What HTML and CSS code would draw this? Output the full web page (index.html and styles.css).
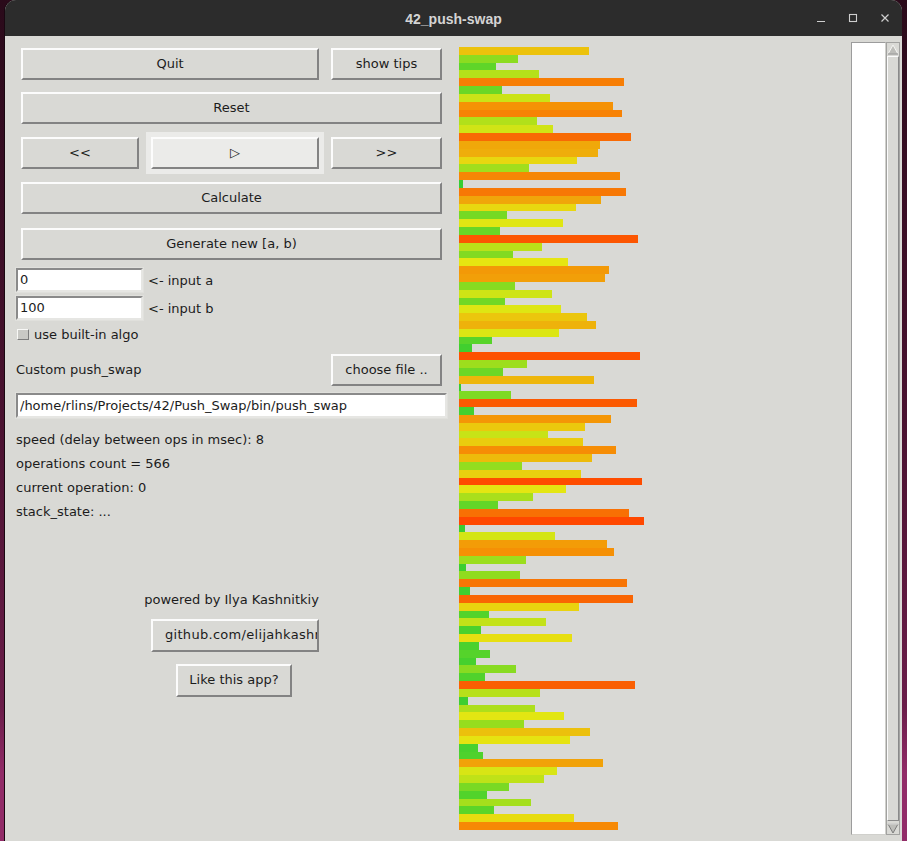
FILE: index.html
```html
<!DOCTYPE html>
<html lang="en">
<head>
<meta charset="utf-8">
<title>42_push-swap</title>
<link rel="stylesheet" href="styles.css">
</head>
<body>
<div class="window">
  <header class="titlebar">
    <span></span>
    <span class="title">42_push-swap</span>
    <div class="controls">
      <svg class="ctl" width="10" height="10" viewBox="0 0 10 10"><path d="M1 8.5H9" stroke="#cfcfcf" stroke-width="1.2"/></svg>
      <svg class="ctl" width="10" height="10" viewBox="0 0 10 10"><rect x="1.5" y="1.5" width="7" height="7" fill="none" stroke="#cfcfcf" stroke-width="1.1"/></svg>
      <svg class="ctl" width="10" height="10" viewBox="0 0 10 10"><path d="M1.5 1.5L8.5 8.5M8.5 1.5L1.5 8.5" stroke="#cfcfcf" stroke-width="1.2"/></svg>
    </div>
  </header>
  <main class="content">
    <section class="left">
      <div class="row r1">
        <button class="btn w-quit">Quit</button>
        <button class="btn w-small">show tips</button>
      </div>
      <button class="btn full r2">Reset</button>
      <div class="row r3">
        <button class="btn w-prev">&lt;&lt;</button>
        <div class="focus"><button class="btn play">▷</button></div>
        <button class="btn w-small">&gt;&gt;</button>
      </div>
      <button class="btn full r4">Calculate</button>
      <button class="btn full r5">Generate new [a, b)</button>
      <div class="field r6"><input class="entry short" value="0"><span>&lt;- input a</span></div>
      <div class="field r7"><input class="entry short" value="100"><span>&lt;- input b</span></div>
      <label class="check r8"><span class="box"></span><span>use built-in algo</span></label>
      <div class="row r9">
        <span class="lbl">Custom push_swap</span>
        <button class="btn w-small">choose file ..</button>
      </div>
      <input class="entry long" value="/home/rlins/Projects/42/Push_Swap/bin/push_swap">
      <div class="stats">
        <p>speed (delay between ops in msec): 8</p>
        <p>operations count = 566</p>
        <p>current operation: 0</p>
        <p>stack_state: ...</p>
      </div>
      <div class="credits">
        <p class="powered">powered by Ilya Kashnitkiy</p>
        <button class="btn gh">github.com/elijahkashnitkiy</button>
        <button class="btn like">Like this app?</button>
      </div>
    </section>
    <section class="canvas" id="bars"></section>
    <aside class="listwrap">
      <div class="listbox"></div>
      <div class="scrollbar">
        <div class="arrow"><svg width="12" height="11" viewBox="0 0 12 11"><path d="M6 1L11 10H1Z" fill="#bdbdb9" stroke="#f4f4f2" stroke-width="1"/><path d="M11 10H1" stroke="#7c7c7c"/></svg></div>
        <div class="slider"></div>
        <div class="arrow"><svg width="12" height="11" viewBox="0 0 12 11"><path d="M6 10L11 1H1Z" fill="#bdbdb9" stroke="#7c7c7c" stroke-width="1"/><path d="M1 1H11" stroke="#f4f4f2"/></svg></div>
      </div>
    </aside>
  </main>
</div>
<script src="app.js"></script>
</body>
</html>
```

FILE: styles.css
```css
* { box-sizing: border-box; margin: 0; padding: 0; }
html, body { width: 907px; height: 841px; overflow: hidden; }
body {
  background: linear-gradient(#2a0a1a 0%, #4a1230 50%, #6a1d49 84%, #922c68 92%, #922c68 100%);
  font-family: "DejaVu Sans", sans-serif;
  font-size: 13px;
  color: #1c1c1c;
}
.window {
  margin-left: 5px;
  width: 897px;
  height: 841px;
  background: #d9d9d5;
  border-radius: 11px 11px 0 0;
  overflow: hidden;
  box-shadow: -1px 0 0 #1a0711;
}
.titlebar {
  height: 36px;
  background: #2c2c2c;
  display: grid;
  grid-template-columns: 1fr auto 1fr;
  align-items: center;
}
.title {
  font: bold 14px "Liberation Sans", sans-serif;
  color: #d4d4d4;
  padding-top: 1px;
}
.controls {
  justify-self: end;
  display: flex;
  gap: 22px;
  padding-right: 12px;
  align-items: center;
}
.ctl { display: block; }

.content { display: flex; height: 805px; }

.left {
  width: 454px;
  flex: none;
  padding-left: 11px;
  display: flex;
  flex-direction: column;
  align-items: flex-start;
}
.btn {
  font: inherit;
  color: inherit;
  background: #d9d9d5;
  border: 2px solid;
  border-color: #fcfcfc #838383 #838383 #fcfcfc;
  height: 32px;
  padding-bottom: 2px;
  display: flex;
  align-items: center;
  justify-content: center;
  flex: none;
}
.row { display: flex; align-items: center; margin-left: 5px; }
.full { width: 421px; margin-left: 5px; }
.r1 { margin-top: 12px; gap: 12px; }
.w-quit { width: 298px; }
.w-small { width: 111px; }
.r2 { margin-top: 12px; }
.r3 { margin-top: 8px; gap: 7px; }
.w-prev { width: 118px; }
.focus { background: #ebebe9; padding: 5px; width: 178px; }
.play { width: 168px; background: #ebebe9; font-family: "DejaVu Sans", sans-serif; }
.r4 { margin-top: 8px; }
.r5 { margin-top: 14px; }

.field { display: flex; align-items: center; gap: 5px; }
.r6 { margin-top: 8px; }
.r7 { margin-top: 4px; }
.entry {
  font: inherit;
  color: inherit;
  background: #fff;
  border: 2px solid;
  border-color: #8a8a8a #e6e6e3 #e6e6e3 #8a8a8a;
  outline: 1px solid #e0e0dc;
  padding: 0 2px 1px;
  height: 24px;
}
.short { width: 127px; }
.long { width: 431px; height: 25px; margin-top: 7px; }

.check { display: flex; align-items: center; gap: 5px; height: 20px; margin-top: 4px; margin-left: 1px; }
.box {
  width: 12px;
  height: 11px;
  background: #c9c9c5;
  border: 1px solid;
  border-color: #f8f8f6 #7d7d7d #7d7d7d #f8f8f6;
}
.r9 { margin-top: 10px; margin-left: 0; width: 426px; justify-content: space-between; }
.lbl { padding-bottom: 1px; }

.stats { margin-top: 10px; }
.stats p { line-height: 24px; }

.credits { margin-left: 5px; width: 421px; margin-top: 64px; display: flex; flex-direction: column; align-items: flex-start; }
.powered { line-height: 24px; align-self: center; }
.gh {
  width: 168px;
  height: 33px;
  margin-top: 7px;
  margin-left: 130px;
  justify-content: flex-start;
  padding-left: 12px;
  overflow: hidden;
  white-space: nowrap;
  letter-spacing: 0.3px;
}
.like { width: 116px; height: 33px; margin-top: 12px; margin-left: 155px; }

.canvas {
  width: 392px;
  flex: none;
  padding-top: 11px;
  display: flex;
  flex-direction: column;
  align-items: flex-start;
}
.bar { height: 7.84px; flex: none; }

.listwrap { display: flex; margin-top: 6px; height: 793px; }
.listbox {
  width: 35px;
  height: 793px;
  background: #fff;
  border: 1px solid;
  border-color: #9c9c9c #d0d0cc #d0d0cc #9c9c9c;
}
.scrollbar {
  width: 14px;
  height: 793px;
  border: 1px solid #a2a2a0;
  background: #d9d9d5;
  display: flex;
  flex-direction: column;
}
.arrow { height: 12px; display: flex; align-items: center; justify-content: center; flex: none; }
.arrow svg { display: block; }
.slider {
  flex: 1;
  border: 1px solid;
  border-color: #fbfbfb #8a8a8a #8a8a8a #fbfbfb;
  margin: 1px 0;
}
```

FILE: app.js
```js
const widths = [130,59,37,80,165,43,91,154,163,78,94,172,141,139,118,70,161,4,167,142,
117,48,104,41,179,83,54,109,150,146,56,93,46,102,128,137,100,33,13,181,
68,44,135,2,52,178,15,152,126,89,124,157,133,63,122,183,107,74,39,170,
185,6,96,148,155,67,7,61,168,11,174,120,30,87,22,113,20,31,17,57,
26,176,81,9,76,105,65,131,111,19,24,144,98,85,50,28,72,35,115,159];

const stops = [
  [0.00, [51, 204, 51]],
  [0.18, [88, 212, 42]],
  [0.32, [140, 220, 32]],
  [0.43, [180, 224, 26]],
  [0.54, [220, 230, 20]],
  [0.59, [230, 230, 17]],
  [0.64, [232, 214, 16]],
  [0.70, [236, 195, 12]],
  [0.77, [240, 165, 10]],
  [0.83, [245, 147, 5]],
  [0.89, [247, 127, 5]],
  [0.93, [248, 106, 4]],
  [0.98, [253, 80, 0]],
  [1.00, [255, 72, 0]]
];

function colorFor(w) {
  const t = Math.min(1, w / 185);
  for (let i = 1; i < stops.length; i++) {
    if (t <= stops[i][0]) {
      const [t0, c0] = stops[i - 1];
      const [t1, c1] = stops[i];
      const f = (t - t0) / (t1 - t0);
      const c = c0.map((v, k) => Math.round(v + (c1[k] - v) * f));
      return `rgb(${c[0]},${c[1]},${c[2]})`;
    }
  }
  return 'rgb(255,72,0)';
}

const host = document.getElementById('bars');
widths.forEach(w => {
  const d = document.createElement('div');
  d.className = 'bar';
  d.style.width = w + 'px';
  d.style.background = colorFor(w);
  host.appendChild(d);
});
```
